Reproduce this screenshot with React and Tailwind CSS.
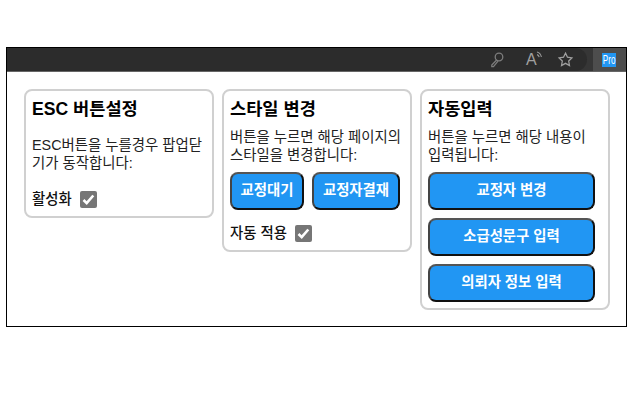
import React from 'react';

const font = 'font-["Liberation_Sans","Noto_Sans_CJK_KR",sans-serif]';

const Check = ({ label }) => (
  <div className="flex items-center h-[20px]">
    <span className="text-[14.4px] leading-[20px] font-medium text-[#111]">{label}</span>
    <span className="ml-[8px] w-[17px] h-[17px] rounded-[2px] bg-[#767676] flex items-center justify-center">
      <svg width="17" height="17" viewBox="0 0 17 17" fill="none">
        <path d="M3.5 9l3.2 3.2 6.6-7.7" stroke="#fff" strokeWidth="2.6" />
      </svg>
    </span>
  </div>
);

const Btn = ({ children, className }) => (
  <button className={`h-[38px] rounded-[8px] border-2 border-t-[#555] border-l-[#444] border-r-[#111] border-b-[#111] bg-[#2196f3] text-white text-[14.4px] font-bold ${className}`}>
    {children}
  </button>
);

const Card = ({ title, children, titleGap, bottom = 'pb-[6px]' }) => (
  <div className={`w-[190px] border-2 border-[#d0d0d0] rounded-[8px] px-[6px] pt-[6px] bg-white ${bottom}`}>
    <h2 className={`text-[17.6px] leading-[24px] font-bold text-black ${titleGap}`}>{title}</h2>
    {children}
  </div>
);

export default function App() {
  return (
    <div className={`${font} w-[640px] h-[400px] bg-white pt-[47px] pl-[6px]`}>
      <div className="w-[621px] h-[280px] border border-black flex flex-col">
        <div className="h-[24px] bg-[#363636] border-b border-[#666] flex items-stretch justify-end shrink-0">
          <div className="flex-1 bg-[#2c2c2c] rounded-r-[12px] flex items-center justify-end">
            <svg width="14" height="16" viewBox="0 0 14 16" fill="none" stroke="#7d7d7d" strokeWidth="1.3" className="mr-[22px]">
              <circle cx="9" cy="5" r="3.8" />
              <path d="M6.6 8L1.8 13v1.6h1.7L8 9.2" />
            </svg>
            <span className="relative w-[15px] text-[16px] leading-none text-[#a0a0a0] mr-[16px]">
              A
              <svg width="7" height="8" viewBox="0 0 7 8" fill="none" stroke="#9a9a9a" strokeWidth="1.1" className="absolute left-[10px] top-[-1px]">
                <path d="M1 1c2.4 .6 3.8 2.4 4.4 5M1 3.6c1.2 .3 1.9 1.2 2.2 2.6" />
              </svg>
            </span>
            <svg width="17" height="17" viewBox="0 0 24 24" fill="none" stroke="#a0a0a0" strokeWidth="1.8" className="mr-[13px]">
              <path d="M12 3l2.8 5.8 6.2.9-4.5 4.4 1.1 6.3L12 17.4l-5.6 3 1.1-6.3L3 9.7l6.2-.9z" />
            </svg>
          </div>
          <div className="w-[33px] ml-[6px] bg-[#4d4d4d] flex items-center pl-[9px]">
            <span className="w-[14px] h-[14px] bg-[#2196f3] flex items-center justify-center overflow-hidden">
              <span className="text-[13px] leading-[14px] text-white scale-x-[0.62] scale-y-[1.05]">Pro</span>
            </span>
          </div>
        </div>
        <div className="flex items-start gap-[8px] pl-[17px] pt-[17px]">
          <Card title="ESC 버튼설정" titleGap="mb-[15px]" bottom="pb-[7px]">
            <p className="text-[14.4px] leading-[18px] text-[#222] mb-[17px]">ESC버튼을 누를경우 팝업닫기가 동작합니다:</p>
            <Check label="활성화" />
          </Card>
          <Card title="스타일 변경" titleGap="mb-[7px]" bottom="pb-[7px]">
            <p className="text-[14.4px] leading-[18px] text-[#222] mb-[8px]">버튼을 누르면 해당 페이지의 스타일을 변경합니다:</p>
            <div className="flex gap-[8px] mb-[13px]">
              <Btn className="w-[74px]">교정대기</Btn>
              <Btn className="w-[88px]">교정자결재</Btn>
            </div>
            <Check label="자동 적용" />
          </Card>
          <Card title="자동입력" titleGap="mb-[7px]" bottom="pb-[6px]">
            <p className="text-[14.4px] leading-[18px] text-[#222] mb-[8px] break-keep">버튼을 누르면 해당 내용이 입력됩니다:</p>
            <div className="flex flex-col gap-[8px]">
              <Btn className="w-[167px]">교정자 변경</Btn>
              <Btn className="w-[167px]">소급성문구 입력</Btn>
              <Btn className="w-[167px]">의뢰자 정보 입력</Btn>
            </div>
          </Card>
        </div>
      </div>
    </div>
  );
}
